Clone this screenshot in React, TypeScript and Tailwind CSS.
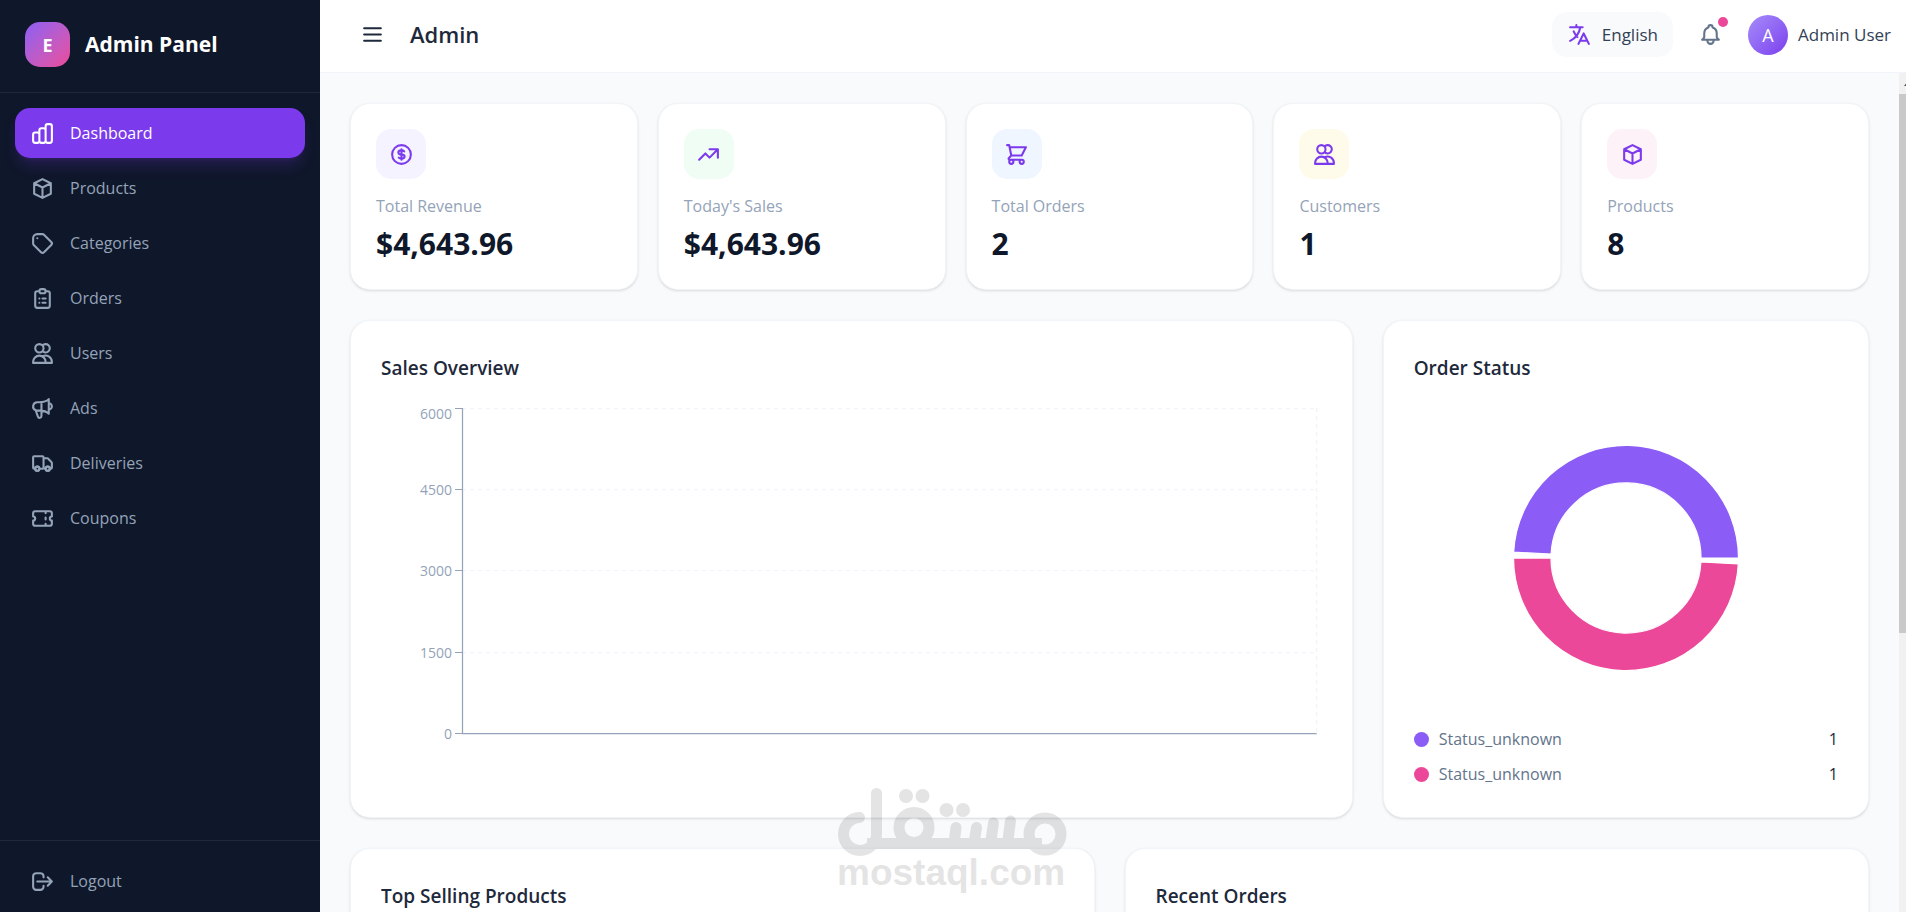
import type { ReactNode } from 'react';
import type { IconType } from 'react-icons';
import {
  HiOutlineBell,
  HiOutlineChartBar,
  HiOutlineClipboardList,
  HiOutlineCube,
  HiOutlineCurrencyDollar,
  HiOutlineLogout,
  HiOutlineMenu,
  HiOutlineShoppingCart,
  HiOutlineSpeakerphone,
  HiOutlineTag,
  HiOutlineTicket,
  HiOutlineTranslate,
  HiOutlineTrendingUp,
  HiOutlineTruck,
  HiOutlineUsers,
} from 'react-icons/hi';

const navItems: { label: string; icon: IconType; active?: boolean }[] = [
  { label: 'Dashboard', icon: HiOutlineChartBar, active: true },
  { label: 'Products', icon: HiOutlineCube },
  { label: 'Categories', icon: HiOutlineTag },
  { label: 'Orders', icon: HiOutlineClipboardList },
  { label: 'Users', icon: HiOutlineUsers },
  { label: 'Ads', icon: HiOutlineSpeakerphone },
  { label: 'Deliveries', icon: HiOutlineTruck },
  { label: 'Coupons', icon: HiOutlineTicket },
];

const stats: { label: string; value: string; icon: IconType; tint: string }[] = [
  { label: 'Total Revenue', value: '$4,643.96', icon: HiOutlineCurrencyDollar, tint: 'bg-[#f5f3ff]' },
  { label: "Today's Sales", value: '$4,643.96', icon: HiOutlineTrendingUp, tint: 'bg-[#f0fdf4]' },
  { label: 'Total Orders', value: '2', icon: HiOutlineShoppingCart, tint: 'bg-[#eff6ff]' },
  { label: 'Customers', value: '1', icon: HiOutlineUsers, tint: 'bg-[#fffbeb]' },
  { label: 'Products', value: '8', icon: HiOutlineCube, tint: 'bg-[#fdf2f8]' },
];

const statuses = [
  { label: 'Status_unknown', value: 1, dot: 'bg-[#8b5cf6]' },
  { label: 'Status_unknown', value: 1, dot: 'bg-[#ec4899]' },
];

const ticks = [
  { label: '6000', y: 6, labelY: 17 },
  { label: '4500', y: 87, labelY: 93 },
  { label: '3000', y: 168, labelY: 174 },
  { label: '1500', y: 250, labelY: 256 },
  { label: '0', y: 331, labelY: 337 },
];

function Sidebar() {
  return (
    <aside className="flex w-[320px] shrink-0 flex-col bg-[#0f172a]">
      <div className="flex h-[93px] shrink-0 items-center gap-[15px] border-b border-[#1e293b] px-[25px] pb-[3px]">
        <div className="flex size-[45px] items-center justify-center rounded-[15px] bg-linear-to-br from-[#8b5cf6] to-[#ec4899] text-lg font-bold text-white">
          E
        </div>
        <span className="text-[21px] font-bold text-white">Admin Panel</span>
      </div>
      <nav className="flex flex-1 flex-col gap-[5px] p-[15px]">
        {navItems.map(({ label, icon: Icon, active }) => (
          <a
            key={label}
            href="#"
            className={
              active
                ? 'flex h-[50px] items-center gap-[15px] rounded-[15px] bg-[#7c3aed] px-[15px] text-base text-white shadow-lg shadow-[#7c3aed]/20'
                : 'flex h-[50px] items-center gap-[15px] rounded-[15px] px-[15px] text-base text-[#94a3b8]'
            }
          >
            <Icon size={25} />
            {label}
          </a>
        ))}
      </nav>
      <div className="border-t border-[#1e293b] px-[15px] pt-[15px] pb-[6px]">
        <button
          type="button"
          className="flex h-[50px] w-full items-center gap-[15px] rounded-[15px] px-[15px] text-base text-[#94a3b8]"
        >
          <HiOutlineLogout size={25} />
          Logout
        </button>
      </div>
    </aside>
  );
}

function Topbar() {
  return (
    <header className="flex h-[73px] shrink-0 items-center border-b border-[#f1f5f9] bg-white pr-[15px] pb-[3px] pl-10">
      <button type="button" aria-label="Toggle menu" className="text-[#1e293b]">
        <HiOutlineMenu size={25} />
      </button>
      <h1 className="ml-[25px] text-[22px] font-semibold text-[#1e293b]">Admin</h1>
      <div className="ml-auto flex items-center">
        <button
          type="button"
          className="flex h-[45px] items-center gap-[10px] rounded-[15px] bg-[#f8fafc] px-[15px] text-[17px] text-[#334155]"
        >
          <HiOutlineTranslate size={25} className="text-[#7c3aed]" />
          English
        </button>
        <button type="button" aria-label="Notifications" className="relative ml-[25px] text-[#64748b]">
          <HiOutlineBell size={25} />
          <span className="absolute -top-[5px] -right-[5px] size-[10px] rounded-full bg-[#ec4899]" />
        </button>
        <div className="ml-[25px] flex items-center gap-[10px]">
          <div className="flex size-10 items-center justify-center rounded-full bg-linear-to-br from-[#a78bfa] to-[#7c3aed] text-lg text-white">
            A
          </div>
          <span className="text-[17px] text-[#334155]">Admin User</span>
        </div>
      </div>
    </header>
  );
}

function Card({ title, className = '', children }: { title: string; className?: string; children?: ReactNode }) {
  return (
    <section className={`rounded-[20px] border border-[#f1f5f9] bg-white p-[30px] shadow-sm ${className}`}>
      <h2 className="text-[19px] leading-[35px] font-semibold text-[#1e293b]">{title}</h2>
      {children}
    </section>
  );
}

function SalesChart() {
  return (
    <div className="mt-4 flex h-[376px]">
      <svg className="h-full w-[81px] shrink-0" role="img" aria-label="Sales axis">
        {ticks.map((t) => (
          <g key={t.label}>
            <line x1="74" x2="81" y1={t.y + 0.5} y2={t.y + 0.5} stroke="#94a3b8" />
            <text x="71" y={t.labelY} textAnchor="end" fill="#94a3b8" className="text-[14px]">
              {t.label}
            </text>
          </g>
        ))}
      </svg>
      <div className="flex-1 pr-[5px]">
        <svg className="h-full w-full overflow-visible" aria-hidden="true">
          {ticks.slice(0, 4).map((t) => (
            <line
              key={t.label}
              x1="0"
              x2="100%"
              y1={t.y + 0.5}
              y2={t.y + 0.5}
              stroke="#f1f5f9"
              strokeWidth="1.25"
              strokeDasharray="4 4"
            />
          ))}
          <line x1="100%" x2="100%" y1="6" y2="331" stroke="#f1f5f9" strokeWidth="1.25" strokeDasharray="4 4" />
          <line x1="0.5" x2="0.5" y1="6" y2="332" stroke="#94a3b8" strokeWidth="1.25" />
          <line x1="0" x2="100%" y1="331.5" y2="331.5" stroke="#94a3b8" strokeWidth="1.25" />
        </svg>
      </div>
    </div>
  );
}

function arc(start: number, end: number, outer: number, inner: number) {
  const at = (r: number, deg: number) => {
    const a = (deg * Math.PI) / 180;
    return `${(r * Math.cos(a)).toFixed(2)} ${(-r * Math.sin(a)).toFixed(2)}`;
  };
  return `M${at(outer, start)}A${outer} ${outer} 0 0 0 ${at(outer, end)}L${at(inner, end)}A${inner} ${inner} 0 0 1 ${at(inner, start)}Z`;
}

function StatusChart() {
  return (
    <svg viewBox="-125 -125 250 250" className="mx-auto mt-[47px] size-[250px]" role="img" aria-label="Order status">
      <g stroke="#ffffff" strokeWidth="1.25">
        <path d={arc(0, 177, 112.5, 75)} fill="#8b5cf6" />
        <path d={arc(180, 357, 112.5, 75)} fill="#ec4899" />
      </g>
    </svg>
  );
}

function Watermark() {
  return (
    <svg
      viewBox="0 0 232 112"
      className="pointer-events-none absolute bottom-[12px] left-[837px] h-[112px] w-[232px] opacity-10"
      role="img"
      aria-label="mostaql.com"
    >
      <g fill="none" stroke="#000000" strokeWidth="11" strokeLinecap="round">
        <path d="M22.5 29.5a16.5 16.5 0 1 0 17 16V5.5" />
        <path d="M30 55.5H205" strokeLinecap="butt" />
        <circle cx="77" cy="39.5" r="15" />
        <path d="M119 39.5l-2 16M139.5 39.5l-2.5 16M156.5 35l-3 20.5M173.5 33l-3 22.5" />
        <circle cx="208" cy="46" r="16" />
      </g>
      <circle cx="69" cy="8" r="7" />
      <circle cx="85.5" cy="8" r="7" />
      <circle cx="109.5" cy="22" r="7" />
      <circle cx="126" cy="22" r="7" />
      <text x="0" y="97" className="font-['Liberation_Sans',sans-serif] text-[37px] font-bold">
        mostaql.com
      </text>
    </svg>
  );
}

function Scrollbar() {
  return (
    <div className="flex w-[7px] shrink-0 flex-col bg-[#f1f1f1]" aria-hidden="true">
      <svg viewBox="0 0 7 21" className="h-[21px] w-[7px]">
        <path d="M5 13l4-5v5z" fill="#505050" />
      </svg>
      <div className="h-[539px] bg-[#c9c9c9]" />
    </div>
  );
}

export default function App() {
  return (
    <div className="relative flex h-screen overflow-hidden bg-[#f8fafc] font-['Open_Sans','Noto_Sans',sans-serif]">
      <Sidebar />
      <div className="flex min-w-0 flex-1 flex-col">
        <Topbar />
        <div className="flex min-h-0 flex-1">
          <main className="flex min-w-0 flex-1 flex-col gap-[30px] overflow-hidden p-[30px]">
            <div className="grid shrink-0 grid-cols-5 gap-5">
              {stats.map(({ label, value, icon: Icon, tint }) => (
                <article key={label} className="rounded-[20px] border border-[#f1f5f9] bg-white p-[25px] shadow-sm">
                  <div className={`flex size-[50px] items-center justify-center rounded-[15px] text-[#7c3aed] ${tint}`}>
                    <Icon size={25} />
                  </div>
                  <p className="mt-[15px] text-base leading-[25px] text-[#94a3b8]">{label}</p>
                  <p className="mt-[5px] text-[30px] leading-[40px] font-bold text-[#0f172a]">{value}</p>
                </article>
              ))}
            </div>
            <div className="grid shrink-0 grid-cols-3 gap-[30px]">
              <Card title="Sales Overview" className="col-span-2">
                <SalesChart />
              </Card>
              <Card title="Order Status">
                <StatusChart />
                <ul className="mt-[44px] flex flex-col gap-[10px]">
                  {statuses.map((s) => (
                    <li key={s.dot} className="flex items-center gap-[10px] text-base leading-[25px]">
                      <span className={`size-[15px] rounded-full ${s.dot}`} />
                      <span className="text-[#64748b]">{s.label}</span>
                      <span className="ml-auto text-[#1e293b]">{s.value}</span>
                    </li>
                  ))}
                </ul>
              </Card>
            </div>
            <div className="grid shrink-0 grid-cols-2 gap-[30px]">
              <Card title="Top Selling Products" className="h-[400px]" />
              <Card title="Recent Orders" className="h-[400px]" />
            </div>
          </main>
          <Scrollbar />
        </div>
      </div>
      <Watermark />
    </div>
  );
}
